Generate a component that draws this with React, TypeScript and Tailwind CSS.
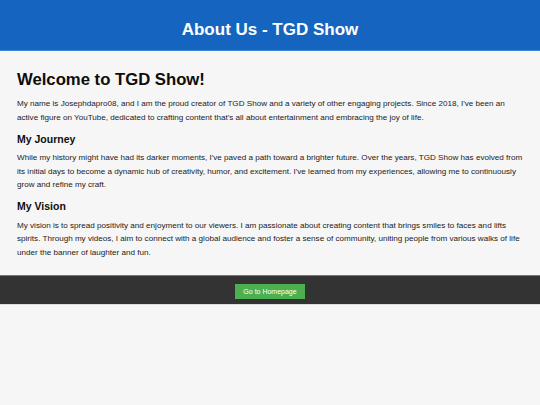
import React from "react";

export default function App() {
  const font = { fontFamily: '"Liberation Sans", Arial, sans-serif' };
  return (
    <div className="min-h-[405px] w-full bg-[#f6f6f6]" style={font}>
      <header className="h-[51px] bg-[#1565c0] pt-[20px] border-b border-[#3f86d6]">
        <h1 className="text-center text-[17px] leading-[20px] font-bold text-white">About Us - TGD Show</h1>
      </header>
      <main className="pl-[17px] pr-[15px] pt-[19px] pb-[16px] text-[#1a1a1a]">
        <h2 className="text-[16.7px] leading-[20px] font-bold text-[#0d0d0d]">Welcome to TGD Show!</h2>
        <p className="mt-[7.3px] text-[8.1px] leading-[13.4px]">
          My name is Josephdapro08, and I am the proud creator of TGD Show and a variety of other engaging projects. Since 2018, I've been an active figure on YouTube, dedicated to crafting content that's all about entertainment and embracing the joy of life.
        </p>
        <h3 className="mt-[8.5px] text-[10.5px] leading-[13px] font-bold text-[#0d0d0d]">My Journey</h3>
        <p className="mt-[5.7px] text-[8.1px] leading-[13.4px]">
          While my history might have had its darker moments, I've paved a path toward a brighter future. Over the years, TGD Show has evolved from its initial days to become a dynamic hub of creativity, humor, and excitement. I've learned from my experiences, allowing me to continuously grow and refine my craft.
        </p>
        <h3 className="mt-[8.2px] text-[10.5px] leading-[13px] font-bold text-[#0d0d0d]">My Vision</h3>
        <p className="mt-[6.2px] text-[8.1px] leading-[13.4px]">
          My vision is to spread positivity and enjoyment to our viewers. I am passionate about creating content that brings smiles to faces and lifts spirits. Through my videos, I aim to connect with a global audience and foster a sense of community, uniting people from various walks of life under the banner of laughter and fun.
        </p>
      </main>
      <footer className="h-[30px] bg-[#333333] border-t border-[#777] border-b border-b-[#ddd] flex justify-center pt-[8px]">
        <button className="h-[15px] px-[8px] bg-[#4caf50] text-white text-[7px] leading-[15px]">Go to Homepage</button>
      </footer>
    </div>
  );
}
